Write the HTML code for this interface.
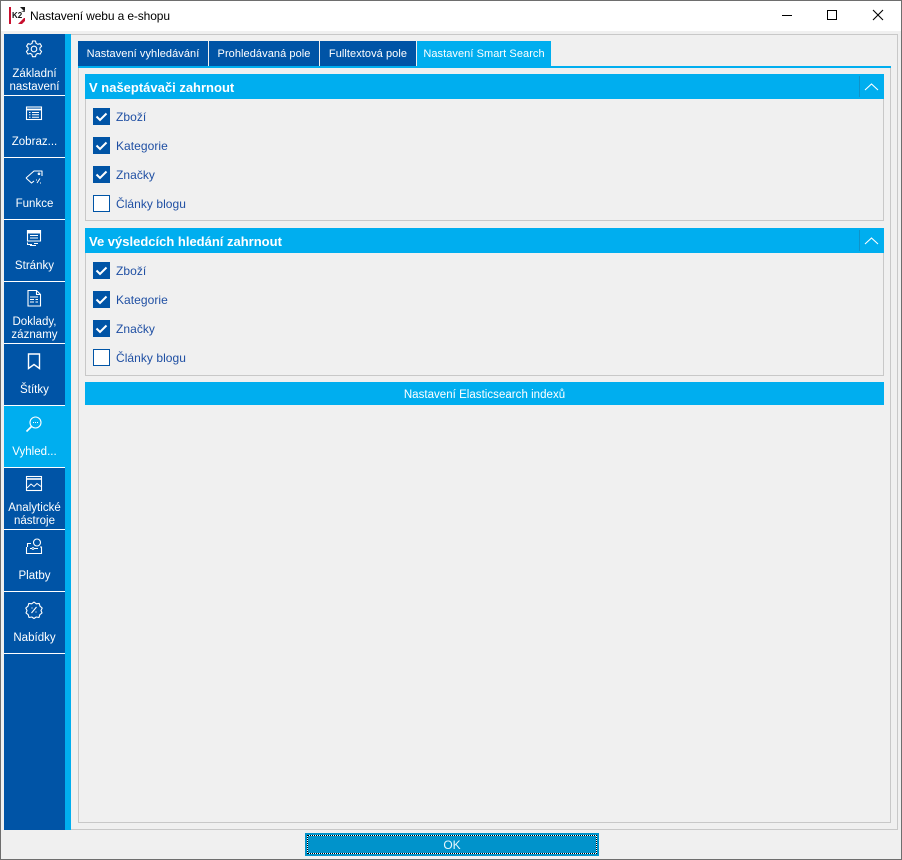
<!DOCTYPE html>
<html><head><meta charset="utf-8"><style>
html,body{margin:0;padding:0}
body{width:902px;height:860px;position:relative;overflow:hidden;background:#f0f0f0;font-family:"Liberation Sans",sans-serif;font-size:12px}
div,span,svg{position:absolute;box-sizing:border-box}
.t{white-space:nowrap;line-height:14px}
.n{left:4px;width:61px;background:#0054a6;border-bottom:1px solid #fff;height:62px}
.n.a{background:#00aeef}
.l{left:0;width:61px;text-align:center;color:#fff;white-space:nowrap;line-height:13px;font-size:11.5px;letter-spacing:.02px}
.n svg{left:20px;top:6px;width:20px;height:20px;fill:none;stroke:#fff;stroke-width:1.100}
.tab{top:41px;height:25px;background:#0054a6;color:#fff;text-align:center;line-height:26px;font-size:11px;letter-spacing:.07px;white-space:nowrap}
.h{left:85px;width:799px;height:25px;background:#00aeef;color:#fff;font-weight:bold;font-size:13px;line-height:27px;padding-left:4px}
.g{left:85px;width:799px;border:1px solid #c8c8c8;border-top:0}
.c{left:93px;width:17px;height:17px;background:#0054a6}
.c.e{background:#fff;border:1px solid #0054a6}
.c svg{left:0;top:0;width:17px;height:17px}
.o{left:116px;color:#1f4fa3;line-height:14px;font-size:12px;letter-spacing:.05px;white-space:nowrap}
</style></head><body>
<div style="left:0;top:0;width:902px;height:31px;background:#fff"></div>
<div style="left:0;top:0;width:1px;height:860px;background:#6e6e6e"></div>
<div style="left:901px;top:0;width:1px;height:860px;background:#6e6e6e"></div>
<div style="left:0;top:0;width:902px;height:1px;background:#6e6e6e"></div>
<div style="left:0;top:859px;width:902px;height:1px;background:#6e6e6e"></div>

<svg style="left:9px;top:7px" width="17" height="17" viewBox="0 0 17 17"><rect width="17" height="17" fill="#fff"/><rect x="0" y="0" width="2" height="17" fill="#c8102e"/><path d="M11 0H16V5Z" fill="#1b1b1b"/><path d="M12 5H16V3Z" fill="#555"/><path d="M9 17L15 11H16V14L13 17Z" fill="#c8102e"/><path d="M2 5H15V11H2Z" fill="#fff"/></svg>
<div class="t" style="left:12px;top:12px;font:bold 8px 'Liberation Sans',sans-serif;color:#111;line-height:8px">K2</div>
<div class="t" style="left:30px;top:9px;color:#000;font-size:12px;letter-spacing:-.12px">Nastavení webu a e-shopu</div>

<svg style="left:780px;top:0" width="122" height="31" viewBox="0 0 122 31" fill="none" stroke="#000"><path d="M2 15.500H12"/><rect x="47.500" y="10.500" width="9" height="9"/><path d="M93 10L103 20M103 10L93 20" stroke-width="1.100"/></svg>

<!-- frames -->
<div style="left:71px;top:34px;width:827px;height:1px;background:#c8c8c8"></div>
<div style="left:897px;top:34px;width:1px;height:796px;background:#c8c8c8"></div>
<div style="left:78px;top:41px;width:1px;height:782px;background:#c8c8c8"></div>
<div style="left:890px;top:68px;width:1px;height:755px;background:#c8c8c8"></div>
<div style="left:78px;top:822px;width:813px;height:1px;background:#c8c8c8"></div>
<div style="left:71px;top:829px;width:827px;height:1px;background:#c8c8c8"></div>

<!-- sidebar -->
<div style="left:65px;top:34px;width:6px;height:796px;background:#00aeef"></div>
<div style="left:4px;top:34px;width:61px;height:796px;background:#0054a6"></div>

<div class="n" style="top:34px"><svg viewBox="0 0 20 20" stroke-linejoin="round" style="top:5px"><path d="M8.500 2h3l.6 2.300 1.700 1 2.300-.7 1.500 2.600-1.700 1.700v1.900l1.700 1.700-1.500 2.600-2.300-.7-1.700 1-.6 2.300h-3l-.6-2.300-1.700-1-2.300.7-1.500-2.600 1.700-1.700v-1.900L2.600 7.200 4.100 4.600l2.300.7 1.700-1z"/><circle cx="10" cy="10" r="2.800"/></svg><div class="l" style="top:34px">Základní<br>nastavení</div></div>

<div class="n" style="top:96px"><svg viewBox="0 0 20 20" style="top:8px"><rect x="2.500" y="3" width="15" height="12.500"/><path d="M2.500 5.500H17.500" stroke-width="1.800"/><path d="M5 8.500H6.500M8 8.500H15M5 10.800H6.500M8 10.800H15M5 13.200H6.500M8 13.200H15" stroke-width="1"/></svg><div class="l" style="top:40px">Zobraz...</div></div>

<div class="n" style="top:158px"><svg viewBox="0 0 20 20" stroke-linejoin="round" style="top:9px"><path d="M2 11L10 4H18V9M2 11L7.500 16L10 14"/><circle cx="15" cy="6.800" r=".8"/><path d="M13 16L16 11.500M16.500 15.500V16.500M12.500 12.500V13.500" stroke-width="1"/></svg><div class="l" style="top:40px">Funkce</div></div>

<div class="n" style="top:220px"><svg viewBox="0 0 20 20" style="top:8px"><path d="M3.500 2.500H16.500V13H3.500Z"/><path d="M3.500 2.500H16.500V5H3.500Z" fill="#fff"/><path d="M6 7.500H14M6 10H14" stroke-width="1"/><path d="M3.500 14.500V16.500H8M10 15.500H14M6 17.500H12" stroke-width="1"/></svg><div class="l" style="top:40px">Stránky</div></div>

<div class="n" style="top:282px"><svg viewBox="0 0 20 20" style="top:6px"><path d="M4 2.500H12.500L16.500 6.500V18H4Z"/><path d="M12.500 2.500V6.500H16.500"/><path d="M6 9H14M6 11.500H10M11.500 11.500H14M6 14H10M11.500 14H14" stroke-width="1"/></svg><div class="l" style="top:34px">Doklady,<br>záznamy</div></div>

<div class="n" style="top:344px"><svg viewBox="0 0 20 20" style="top:7px"><path d="M4.500 3H15.500V17.500L10 13.500L4.500 17.500Z" stroke-width="1.400"/></svg><div class="l" style="top:40px">Štítky</div></div>

<div class="n a" style="top:406px"><svg viewBox="0 0 20 20" style="top:8px"><circle cx="11.500" cy="8.500" r="5.500"/><path d="M7.500 12.500L2.500 17.500" stroke-width="1.600"/><path d="M9 8.500H10M11 8.500H12M13 8.500H14" stroke-width="1"/></svg><div class="l" style="top:40px">Vyhled...</div></div>

<div class="n" style="top:468px"><svg viewBox="0 0 20 20"><rect x="2.500" y="2.500" width="15" height="14"/><path d="M2.500 5H17.500" stroke-width="1.600"/><path d="M3 14L7 10L10 12.500L13 9.500L17 12.500" stroke-width="1"/></svg><div class="l" style="top:34px">Analytické<br>nástroje</div></div>

<div class="n" style="top:530px"><svg viewBox="0 0 20 20" style="top:7px"><circle cx="13" cy="5.500" r="3.500"/><path d="M7 6.500H3.500V10M2.500 10V16.500H17.500V10H16"/><path d="M6 11.500H8M10 11.500H14" stroke-width="1"/><circle cx="9" cy="11.500" r="1" stroke-width=".8"/></svg><div class="l" style="top:40px">Platby</div></div>

<div class="n" style="top:592px"><svg viewBox="0 0 20 20" stroke-linejoin="round" style="top:8px"><path d="M10 2L12.300 3.800 15.200 3.400 16 6.200 18.200 8 17 10.500 18 13 15.800 14.700 15 17.500 12.200 17 10 18.500 7.800 17 5 17.500 4.200 14.700 2 13 3 10.500 1.800 8 4 6.200 4.800 3.400 7.700 3.800Z"/><path d="M12.500 7L7.500 13M8 7.500V8.500M12 11.500V12.500" stroke-width="1.100"/></svg><div class="l" style="top:40px">Nabídky</div></div>

<!-- tabs -->
<div class="tab" style="left:78px;width:130px">Nastavení vyhledávání</div>
<div class="tab" style="left:209px;width:110px">Prohledávaná pole</div>
<div class="tab" style="left:320px;width:96px">Fulltextová pole</div>
<div class="tab" style="left:417px;width:134px;background:#00aeef">Nastavení Smart Search</div>
<div style="left:78px;top:66px;width:813px;height:2px;background:#00aeef"></div>

<!-- group 1 -->
<div class="g" style="top:99px;height:122px"></div>
<div class="h" style="top:74px">V našeptávači zahrnout</div>
<div style="left:859px;top:76px;width:1px;height:21px;background:#0f93c9"></div>
<svg style="left:864px;top:82px" width="15" height="9" viewBox="0 0 15 9" fill="none" stroke="#fff" stroke-width="1.100"><path d="M1 8L7.500 2L14 8"/></svg>

<div class="c" style="top:108px"><svg viewBox="0 0 17 17" fill="none" stroke="#fff" stroke-width="2"><path d="M3.500 8.500L7 12L13.500 5.500"/></svg></div><div class="o" style="top:110px">Zboží</div>
<div class="c" style="top:137px"><svg viewBox="0 0 17 17" fill="none" stroke="#fff" stroke-width="2"><path d="M3.500 8.500L7 12L13.500 5.500"/></svg></div><div class="o" style="top:139px">Kategorie</div>
<div class="c" style="top:166px"><svg viewBox="0 0 17 17" fill="none" stroke="#fff" stroke-width="2"><path d="M3.500 8.500L7 12L13.500 5.500"/></svg></div><div class="o" style="top:168px">Značky</div>
<div class="c e" style="top:195px"></div><div class="o" style="top:197px">Články blogu</div>

<!-- group 2 -->
<div class="g" style="top:253px;height:123px"></div>
<div class="h" style="top:228px">Ve výsledcích hledání zahrnout</div>
<div style="left:859px;top:230px;width:1px;height:21px;background:#0f93c9"></div>
<svg style="left:864px;top:236px" width="15" height="9" viewBox="0 0 15 9" fill="none" stroke="#fff" stroke-width="1.100"><path d="M1 8L7.500 2L14 8"/></svg>

<div class="c" style="top:262px"><svg viewBox="0 0 17 17" fill="none" stroke="#fff" stroke-width="2"><path d="M3.500 8.500L7 12L13.500 5.500"/></svg></div><div class="o" style="top:264px">Zboží</div>
<div class="c" style="top:291px"><svg viewBox="0 0 17 17" fill="none" stroke="#fff" stroke-width="2"><path d="M3.500 8.500L7 12L13.500 5.500"/></svg></div><div class="o" style="top:293px">Kategorie</div>
<div class="c" style="top:320px"><svg viewBox="0 0 17 17" fill="none" stroke="#fff" stroke-width="2"><path d="M3.500 8.500L7 12L13.500 5.500"/></svg></div><div class="o" style="top:322px">Značky</div>
<div class="c e" style="top:349px"></div><div class="o" style="top:351px">Články blogu</div>

<!-- elastic button -->
<div style="left:85px;top:382px;width:799px;height:23px;background:#00aeef;color:#fff;text-align:center;line-height:26px;font-size:11.5px;letter-spacing:.03px">Nastavení Elasticsearch indexů</div>

<!-- OK -->
<div style="left:305px;top:833px;width:294px;height:23px;background:#0093cb;border:2px solid #0093cb;color:#e8f6fc;font-size:12px"><div style="left:0;top:0;width:290px;height:19px;border:1px solid #fff"></div><div style="left:0;top:0;width:290px;height:19px;border:1px dotted #000;line-height:18px;text-align:center;color:#e8f6fc">OK</div></div>
</body></html>
